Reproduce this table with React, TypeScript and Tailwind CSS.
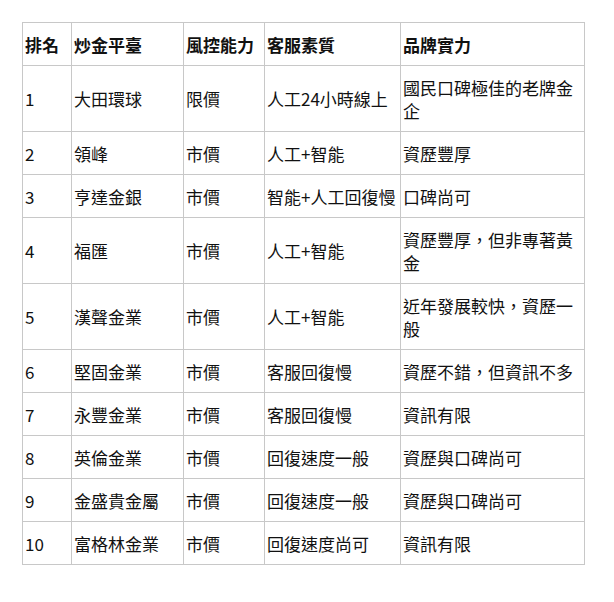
const rows = [
  ["1", "大田環球", "限價", "人工24小時線上", "國民口碑極佳的老牌金企"],
  ["2", "領峰", "市價", "人工+智能", "資歷豐厚"],
  ["3", "亨達金銀", "市價", "智能+人工回復慢", "口碑尚可"],
  ["4", "福匯", "市價", "人工+智能", "資歷豐厚，但非專著黃金"],
  ["5", "漢聲金業", "市價", "人工+智能", "近年發展較快，資歷一般"],
  ["6", "堅固金業", "市價", "客服回復慢", "資歷不錯，但資訊不多"],
  ["7", "永豐金業", "市價", "客服回復慢", "資訊有限"],
  ["8", "英倫金業", "市價", "回復速度一般", "資歷與口碑尚可"],
  ["9", "金盛貴金屬", "市價", "回復速度一般", "資歷與口碑尚可"],
  ["10", "富格林金業", "市價", "回復速度尚可", "資訊有限"],
];

const headers = ["排名", "炒金平臺", "風控能力", "客服素質", "品牌實力"];

export default function App() {
  return (
    <div className="min-h-screen bg-white pl-[22px] pt-[22px] font-['Noto_Sans_CJK_TC','Noto_Sans',sans-serif] text-[17px] text-[#111]">
      <table className="w-[562px] table-fixed border-collapse">
        <colgroup>
          <col className="w-[49px]" />
          <col className="w-[112px]" />
          <col className="w-[81px]" />
          <col className="w-[136px]" />
          <col className="w-[184px]" />
        </colgroup>
        <thead>
          <tr>
            {headers.map((h) => (
              <th
                key={h}
                className="border border-[#c8c8c8] px-[2px] py-[9.5px] text-left align-middle font-bold leading-[23px]"
              >
                {h}
              </th>
            ))}
          </tr>
        </thead>
        <tbody>
          {rows.map((r) => (
            <tr key={r[0]}>
              {r.map((c, i) => (
                <td
                  key={i}
                  className="border border-[#c8c8c8] px-[2px] py-[9.5px] align-middle leading-[23px]"
                >
                  {c}
                </td>
              ))}
            </tr>
          ))}
        </tbody>
      </table>
    </div>
  );
}
